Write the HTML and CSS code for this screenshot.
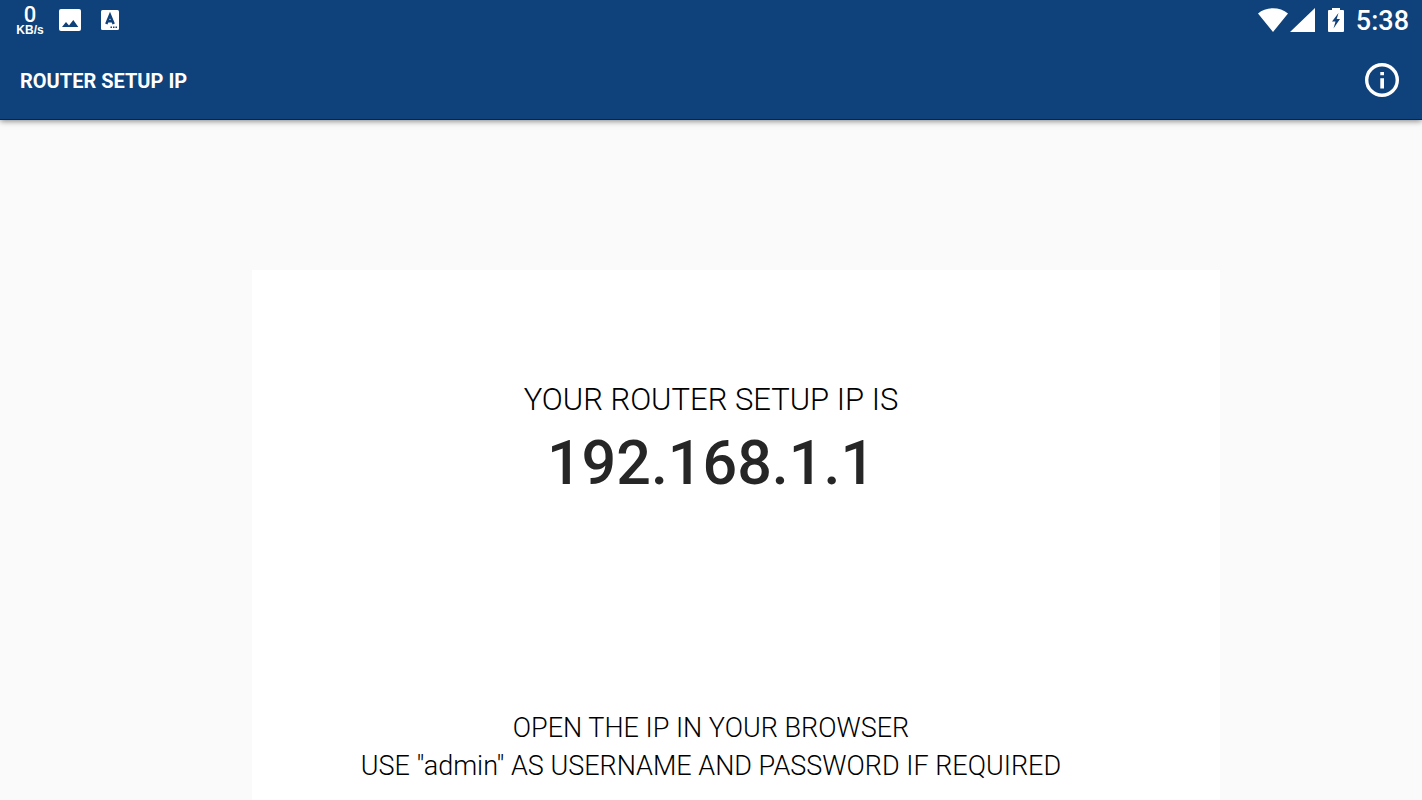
FILE: index.html
```html
<!DOCTYPE html>
<html lang="en">
<head>
<meta charset="utf-8">
<meta name="viewport" content="width=device-width, initial-scale=1">
<title>Router Setup IP</title>
<link rel="stylesheet" href="styles.css">
</head>
<body>
<header class="header">
  <div class="status-bar">
    <div class="status-group">
      <div class="speed"><span class="speed-value">0</span><span class="speed-unit">KB/s</span></div>
      <svg class="icon-picture" viewBox="0 0 22 22" aria-hidden="true">
        <rect width="22" height="22" rx="2" fill="#fff"/>
        <path class="cutout" d="M3 18l4-5 3 3.500 4.300-5.500 5 7z"/>
      </svg>
      <svg class="icon-letter" viewBox="0 0 18 20" aria-hidden="true">
        <rect width="18" height="20" rx="1.500" fill="#fff"/>
        <path class="letter" d="M5.300 14L9 5l3.700 9M6.500 11.300h5"/>
        <path class="cutout" d="M9.500 16.500h1.500v1.500H9.500zM12 16.500h1.500v1.500H12zM14.500 16.500H16v1.500h-1.500z"/>
      </svg>
    </div>
    <div class="status-group status-right">
      <svg class="icon-signal" viewBox="0 0 58 24" aria-hidden="true">
        <path fill="#fff" d="M0 5.500C8-1.500 22-1.500 30 5.500L15 24zM57 0v24H32z"/>
      </svg>
      <svg class="icon-battery" viewBox="0 0 16 24" aria-hidden="true">
        <path fill="#fff" d="M4 0h8v2h3q1 0 1 1v20q0 1-1 1H1q-1 0-1-1V3q0-1 1-1h3z"/>
        <path class="cutout" d="M10.500 5L4 13.500h3.500L5.500 20.500 12 11H8.700z"/>
      </svg>
      <time class="clock">5:38</time>
    </div>
  </div>
  <div class="app-bar">
    <h1 class="title">ROUTER SETUP IP</h1>
    <button class="info-button" type="button" aria-label="Information">
      <svg class="icon-info" viewBox="0 0 34 34" aria-hidden="true">
        <circle cx="17" cy="17" r="15.300" fill="none" stroke="#fff" stroke-width="3.400"/>
        <path fill="#fff" d="M15.300 9h3.700v3.200h-3.700zM15.300 15.200h3.700v10.300h-3.700z"/>
      </svg>
    </button>
  </div>
</header>
<main class="content">
  <section class="card">
    <p class="label">YOUR ROUTER SETUP IP IS</p>
    <p class="address">192.168.1.1</p>
    <p class="hint">OPEN THE IP IN YOUR BROWSER<br>USE "admin" AS USERNAME AND PASSWORD IF REQUIRED</p>
  </section>
</main>
</body>
</html>
```
FILE: styles.css
```css
* {
  box-sizing: border-box;
}

body {
  display: flex;
  flex-direction: column;
  min-height: 100vh;
  margin: 0;
  background: #fafafa;
  color: #000;
  font-family: Roboto, "Liberation Sans", sans-serif;
}

.header {
  background: #0f417a;
  border-bottom: 1px solid #062457;
  box-shadow: 0 1px 6px rgba(0, 0, 0, 0.5);
  color: #fff;
}

.status-bar,
.status-group,
.app-bar {
  display: flex;
  align-items: center;
}

.status-bar,
.app-bar {
  justify-content: space-between;
}

.status-bar {
  height: 40px;
  padding: 0 13px 0 16px;
}

.speed {
  display: flex;
  flex-direction: column;
  align-items: center;
  width: 28px;
  margin-right: 15px;
  padding-top: 2px;
}

.speed-value {
  font-size: 22px;
  font-weight: 500;
  line-height: 18px;
}

.speed-unit {
  font: 700 12px/12px "Liberation Sans", sans-serif;
}

.icon-picture {
  width: 22px;
  height: 22px;
  margin-right: 20px;
}

.icon-letter {
  width: 18px;
  height: 20px;
}

.cutout {
  fill: #0f417a;
}

.letter {
  fill: none;
  stroke: #0f417a;
  stroke-width: 2.5;
}

.status-right {
  gap: 12px;
}

.icon-signal {
  width: 58px;
  height: 24px;
}

.icon-battery {
  width: 16px;
  height: 24px;
}

.clock {
  padding-top: 2px;
  font-size: 27px;
  font-weight: 500;
  line-height: 40px;
}

.app-bar {
  height: 79px;
  padding: 0 20px;
}

.title {
  margin: 0;
  padding-top: 2px;
  font-size: 20px;
  font-weight: 700;
}

.info-button {
  display: flex;
  padding: 3px;
  border: 0;
  background: none;
  cursor: pointer;
}

.icon-info {
  width: 34px;
  height: 34px;
}

.content {
  display: flex;
  flex: 1;
  padding: 150px 202px 0 252px;
}

.card {
  flex: 1;
  padding: 110px 50px 15px 0;
  background: #fff;
  text-align: center;
}

.label,
.address,
.hint {
  margin: 0;
}

.label {
  font-size: 31px;
  font-weight: 300;
  line-height: 40px;
}

.address {
  color: #262626;
  font-size: 61px;
  font-weight: 500;
  line-height: 86px;
}

.hint {
  margin-top: 203px;
  font-size: 27px;
  font-weight: 300;
  line-height: 38px;
}
```
